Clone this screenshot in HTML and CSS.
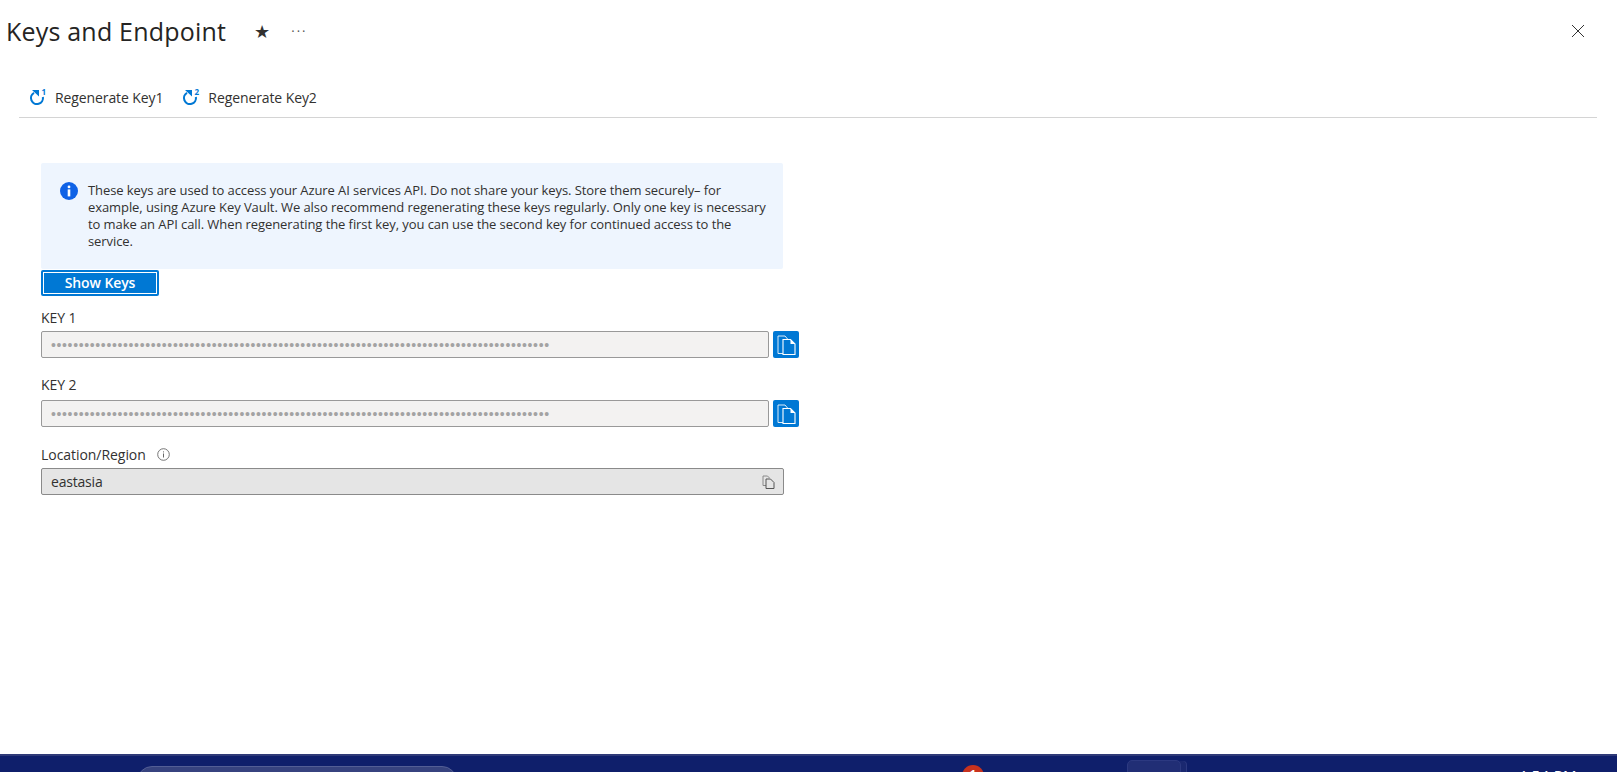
FILE: index.html
```html
<!DOCTYPE html>
<html lang="en">
<head>
<meta charset="utf-8">
<title>Keys and Endpoint</title>
<link rel="stylesheet" href="styles.css">
</head>
<body>
<main class="blade">
  <header class="blade-head">
    <h1 class="blade-title">Keys and Endpoint</h1>
    <span class="star">★</span>
    <span class="more">···</span>
    <svg class="close" width="14" height="14" viewBox="0 0 14 14"><path d="M1 1l12 12M13 1L1 13" stroke="#333" stroke-width="1" fill="none"/></svg>
  </header>
  <nav class="toolbar">
    <button class="tool">
      <svg class="tool-icon" width="17" height="16" viewBox="0 0 17 16"><path d="M12.9 8A6 6 0 1 1 4 3.8" stroke="#0078d4" stroke-width="2.1" fill="none"/><path d="M2 1H9V7.5z" fill="#0078d4"/><text x="11.5" y="5.6" class="tool-sup">1</text></svg>
      <span>Regenerate Key1</span>
    </button>
    <button class="tool">
      <svg class="tool-icon" width="17" height="16" viewBox="0 0 17 16"><path d="M12.9 8A6 6 0 1 1 4 3.8" stroke="#0078d4" stroke-width="2.1" fill="none"/><path d="M2 1H9V7.5z" fill="#0078d4"/><text x="11.5" y="5.6" class="tool-sup">2</text></svg>
      <span>Regenerate Key2</span>
    </button>
  </nav>
  <section class="content">
    <div class="notice">
      <svg class="notice-icon" width="18" height="18" viewBox="0 0 18 18"><circle cx="9" cy="9" r="9" fill="#0f62e6"/><circle cx="9" cy="4.9" r="1.4" fill="#fff"/><rect x="7.7" y="7.4" width="2.6" height="7" fill="#fff"/></svg>
      <p class="notice-text">These keys are used to access your Azure AI services API. Do not share your keys. Store them securely– for<br>example, using Azure Key Vault. We also recommend regenerating these keys regularly. Only one key is necessary<br>to make an API call. When regenerating the first key, you can use the second key for continued access to the<br>service.</p>
    </div>
    <button class="show-keys"><span>Show Keys</span></button>
    <div class="field field-first">
      <label class="label">KEY 1</label>
      <div class="key-row">
        <div class="input secret"><span class="dots">••••••••••••••••••••••••••••••••••••••••••••••••••••••••••••••••••••••••••••••••••••••••••</span></div>
        <button class="copy-btn"><svg width="20" height="22" viewBox="0 0 20 22"><path d="M7 19.5H2V2h7l3 3.5" fill="none" stroke="#dcecf9" stroke-width="1"/><path d="M7 5.5h7.5l4.5 4.5v10.5H7z" fill="#0078d4" stroke="#fff" stroke-width="1.1"/><path d="M14.5 5.5v4.5H19z" fill="#fff"/></svg></button>
      </div>
    </div>
    <div class="field field-second">
      <label class="label">KEY 2</label>
      <div class="key-row">
        <div class="input secret"><span class="dots">••••••••••••••••••••••••••••••••••••••••••••••••••••••••••••••••••••••••••••••••••••••••••</span></div>
        <button class="copy-btn"><svg width="20" height="22" viewBox="0 0 20 22"><path d="M7 19.5H2V2h7l3 3.5" fill="none" stroke="#dcecf9" stroke-width="1"/><path d="M7 5.5h7.5l4.5 4.5v10.5H7z" fill="#0078d4" stroke="#fff" stroke-width="1.1"/><path d="M14.5 5.5v4.5H19z" fill="#fff"/></svg></button>
      </div>
    </div>
    <div class="field field-third">
      <label class="label label-info">Location/Region
        <svg class="label-icon" width="13" height="13" viewBox="0 0 13 13"><circle cx="6.5" cy="6.5" r="5.8" fill="none" stroke="#666" stroke-width=".9"/><path d="M6.5 5.5v4M6.5 3.4v1" stroke="#666" stroke-width="1"/></svg>
      </label>
      <div class="input region">
        <span>eastasia</span>
        <svg width="13" height="14" viewBox="0 0 13 14"><path d="M4 10.5H1V1h4.5l2 2" fill="none" stroke="#8a8a8a"/><path d="M4 4h4.5L12 7.5v6H4z" fill="#e5e5e5" stroke="#555"/></svg>
      </div>
    </div>
  </section>
</main>
<footer class="taskbar">
  <div class="search-pill"></div>
  <div class="badge"><span>1</span></div>
  <div class="task-app"></div>
  <div class="clock">4:54 PM</div>
</footer>
</body>
</html>
```
FILE: styles.css
```css
* { box-sizing: border-box; }
html, body { margin: 0; height: 100%; }
body {
  width: 1617px;
  height: 772px;
  overflow: hidden;
  display: flex;
  flex-direction: column;
  background: #fff;
  color: #323130;
  font-family: "Open Sans", "Noto Sans", "Liberation Sans", sans-serif;
  font-size: 13px;
}
button { font-family: inherit; border: 0; background: none; padding: 0; color: inherit; }
.blade { flex: 1; min-height: 0; }
.blade-head {
  display: flex;
  align-items: center;
  height: 62px;
  padding: 0 32px 0 6px;
}
.blade-title {
  margin: 0;
  font-size: 25px;
  line-height: 32px;
  font-weight: 400;
  color: #252423;
  letter-spacing: .2px;
}
.star { margin-left: 28px; font-size: 18px; color: #323130; font-family: "DejaVu Sans", sans-serif; }
.more { margin-left: 21px; font-size: 13px; color: #555; letter-spacing: 2px; }
.close { margin-left: auto; }
.toolbar {
  display: flex;
  gap: 20px;
  height: 56px;
  margin: 0 20px 0 19px;
  padding: 19px 0 0 11px;
  border-bottom: 1px solid #d4d4d4;
  align-items: flex-start;
}
.tool { display: flex; align-items: center; gap: 8px; height: 32px; font-size: 14px; letter-spacing: -.1px; color: #323130; }
.tool-icon { overflow: visible; }
.tool-sup { font: 700 8px "Open Sans", sans-serif; fill: #0078d4; }
.content { padding: 45px 0 0 41px; }
.notice {
  display: flex;
  width: 742px;
  height: 106px;
  padding: 19px 16px 0 19px;
  gap: 10px;
  background: #eef5fe;
  border-radius: 2px;
}
.notice-icon { flex: none; }
.notice-text { margin: 0; font-size: 13px; line-height: 17px; color: #323130; white-space: nowrap; letter-spacing: -.08px; }
.show-keys {
  display: block;
  width: 118px;
  height: 26px;
  margin-top: 1px;
  padding: 2px;
  background: #0078d4;
  border-radius: 2px;
  color: #fff;
  font-size: 14px;
  font-weight: 600;
  letter-spacing: -.1px;
}
.show-keys span {
  display: block;
  height: 100%;
  line-height: 20px;
  border: 1px solid #fff;
}
.field-first { margin-top: 13px; }
.field-second { margin-top: 18px; }
.field-third { margin-top: 21px; }
.label { display: block; height: 22px; line-height: 18px; font-size: 14px; letter-spacing: -.05px; color: #323130; }
.field-second .label { height: 24px; }
.field-third .label { height: 20px; line-height: 12px; }
.label-icon { margin-left: 8px; vertical-align: -1px; }
.key-row { display: flex; gap: 4px; }
.input {
  display: flex;
  align-items: center;
  height: 27px;
  border: 1px solid #999;
  border-radius: 2px;
  padding: 0 9px;
}
.secret { width: 728px; background: #f3f2f1; }
.dots {
  font-family: "Liberation Sans", sans-serif;
  font-size: 14px;
  color: #a3a3a3;
  letter-spacing: .64px;
  white-space: nowrap;
}
.region {
  width: 743px;
  justify-content: space-between;
  background: #e5e5e5;
  border-color: #8a8a8a;
  font-size: 14px;
  letter-spacing: -.2px;
  padding-right: 8px;
}
.copy-btn {
  display: flex;
  align-items: center;
  justify-content: center;
  width: 26px;
  height: 27px;
  background: #0078d4;
  border-radius: 2px;
}
.taskbar {
  flex: none;
  height: 18px;
  background: #0f1f6b;
  border-top: 2px solid #2f3a78;
  overflow: hidden;
  display: flex;
}
.search-pill {
  width: 320px;
  height: 30px;
  margin: 10px 0 0 137px;
  background: #37437f;
  border: 1px solid #535e95;
  border-radius: 16px;
}
.badge {
  width: 22px;
  height: 22px;
  margin: 9px 0 0 505px;
  background: #c8321e;
  border-radius: 50%;
  color: #fff;
  text-align: center;
  font-size: 11px;
  font-weight: 700;
  line-height: 18px;
}
.task-app {
  width: 54px;
  height: 30px;
  margin: 4px 0 0 143px;
  background: #212e75;
  border: 1px solid #2c3981;
  border-radius: 5px;
  box-shadow: 6px 0 0 -1px #1a2870, 7px 0 0 -1px #2c3981;
}
.clock {
  margin: 11px 40px 0 auto;
  color: #fff;
  font: 15px/16px "Open Sans", sans-serif;
  letter-spacing: .4px;
}
```
